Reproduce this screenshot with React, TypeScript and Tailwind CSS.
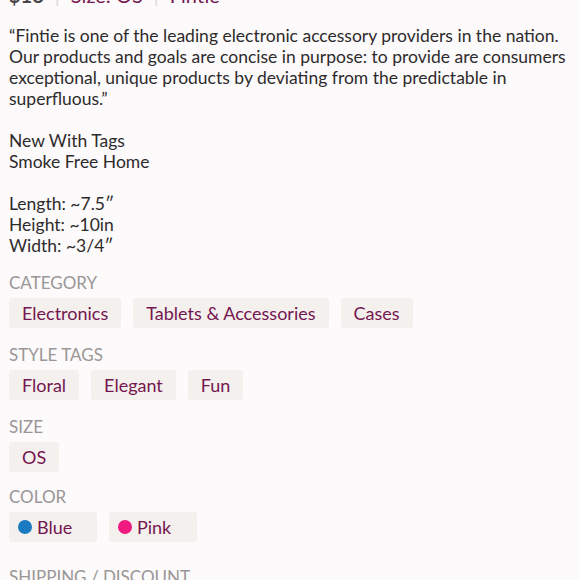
const categories = ['Electronics', 'Tablets & Accessories', 'Cases']
const styleTags = ['Floral', 'Elegant', 'Fun']
const colors = [
  { name: 'Blue', dot: 'bg-[#1b7bc0]' },
  { name: 'Pink', dot: 'bg-[#f01a80]' },
]

function Chip({ children }: { children: React.ReactNode }) {
  return (
    <span className="flex h-[30px] items-center rounded-[3px] bg-[#f4f0ee] px-[13px] text-[18px] text-[#74164f]">
      {children}
    </span>
  )
}

function Section({ label, children }: { label: string; children: React.ReactNode }) {
  return (
    <div className="mt-[17px]">
      <div className="h-[20px] text-[17px] leading-[20px] uppercase text-[#9a9696]">{label}</div>
      <div className="mt-[5px] flex flex-wrap gap-[12px]">{children}</div>
    </div>
  )
}

export default function App() {
  return (
    <div
      className="h-[580px] w-[580px] overflow-hidden bg-[#fcfafb] px-[9px] text-[#2e2b2c]"
      style={{ fontFamily: 'Lato, "Noto Sans", sans-serif' }}
    >
      <div className="-mt-[17px] flex items-center text-[20px] leading-[24px]">
        <span className="font-bold text-[#4a4647]">$18</span>
        <span className="mx-[11px] text-[#dcd8d9]">|</span>
        <span className="text-[#74164f]">Size: OS</span>
        <span className="mx-[11px] text-[#dcd8d9]">|</span>
        <span className="text-[#74164f]">Fintie</span>
      </div>

      <div className="mt-[18px] text-[17.5px] leading-[21px]">
        <p className="-mr-[6px]">
          “Fintie is one of the leading electronic accessory providers in the nation. Our products and goals are
          concise in purpose: to provide are consumers exceptional, unique products by deviating from the
          predictable in superfluous.”
        </p>
        <p className="mt-[21px]">New With Tags</p>
        <p>Smoke Free Home</p>
        <p className="mt-[21px]">Length: ~7.5″</p>
        <p>Height: ~10in</p>
        <p>Width: ~3/4″</p>
      </div>

      <Section label="Category">
        {categories.map(c => <Chip key={c}>{c}</Chip>)}
      </Section>

      <Section label="Style Tags">
        {styleTags.map(c => <Chip key={c}>{c}</Chip>)}
      </Section>

      <Section label="Size">
        <Chip>OS</Chip>
      </Section>

      <div className="mt-[15px]">
        <div className="h-[20px] text-[17px] leading-[20px] uppercase text-[#9a9696]">Color</div>
        <div className="mt-[5px] flex gap-[12px]">
          {colors.map(c => (
            <span key={c.name} className="flex h-[30px] w-[88px] items-center rounded-[3px] bg-[#f4f0ee] pl-[9px] text-[18px] text-[#74164f]">
              <span className={`mr-[5px] h-[14px] w-[14px] rounded-full ${c.dot}`} />
              {c.name}
            </span>
          ))}
        </div>
      </div>

      <div className="mt-[25px] h-[20px] text-[17px] leading-[20px] uppercase text-[#9a9696]">Shipping / Discount</div>
    </div>
  )
}
